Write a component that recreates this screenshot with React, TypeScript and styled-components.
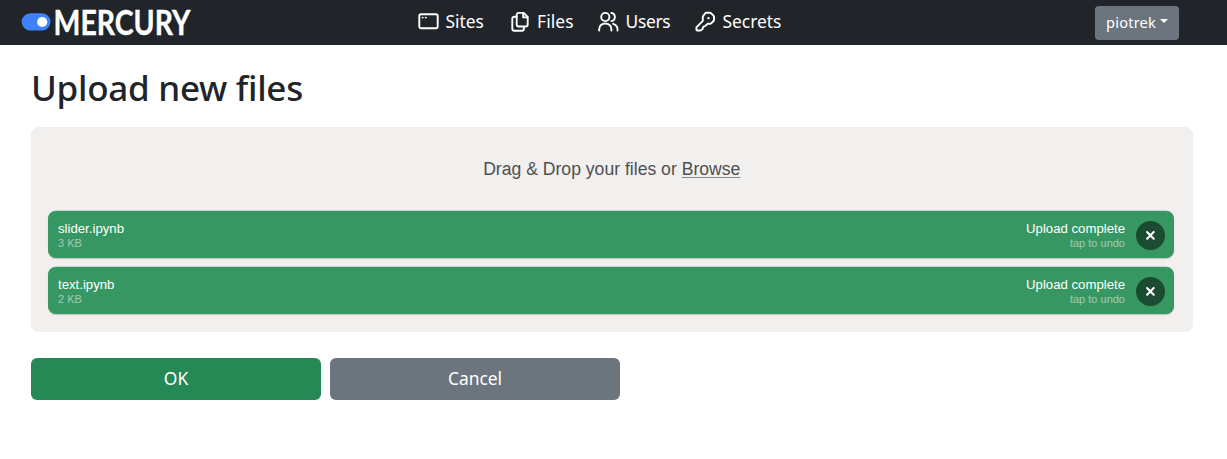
import React from "react";
import styled, { createGlobalStyle } from "styled-components";

const GlobalStyle = createGlobalStyle`
  * { box-sizing: border-box; }
  body {
    margin: 0;
    background: #fff;
    color: #212529;
    font-family: "Noto Sans", sans-serif;
  }
`;

const Navbar = styled.header`
  display: grid;
  grid-template-columns: 1fr auto 1fr;
  align-items: center;
  height: 45px;
  padding: 0 48px 0 21px;
  background: #212529;
  color: #fff;
`;

const Logo = styled.svg`
  display: block;
  overflow: visible;
`;

const Nav = styled.nav`
  display: flex;
  gap: 26px;
`;

const NavLink = styled.a<{ $width: number; $gap?: number; $spacing?: number }>`
  display: flex;
  align-items: center;
  gap: ${(p) => p.$gap ?? 6.5}px;
  width: ${(p) => p.$width}px;
  padding-bottom: 2px;
  font-size: 17.4px;
  line-height: 24px;
  letter-spacing: ${(p) => p.$spacing ?? 0}px;
  white-space: nowrap;
`;

const NavText = styled.span`
  padding-bottom: 2px;
  line-height: 22px;
`;

const NavIcon = styled.svg.attrs({
  width: 21,
  height: 21,
  viewBox: "0 0 21 21",
  fill: "none",
  stroke: "#fff",
  strokeWidth: 1.9,
  strokeLinejoin: "round",
  strokeLinecap: "round",
})`
  flex: none;
`;

const UserButton = styled.button`
  display: flex;
  align-items: center;
  justify-content: center;
  justify-self: end;
  gap: 4px;
  width: 84px;
  height: 34px;
  margin-top: 1px;
  padding: 0 0 2px;
  border: 0;
  border-radius: 4px;
  background: #6c757d;
  color: #fff;
  font: 14.6px "Noto Sans", sans-serif;
  letter-spacing: 0.2px;
`;

const Caret = styled.span`
  margin-top: -2px;
  border-top: 4.5px solid;
  border-left: 4.5px solid transparent;
  border-right: 4.5px solid transparent;
`;

const Main = styled.main`
  padding: 21px 34px 0 31px;
`;

const Title = styled.h1`
  margin: 0 0 17px;
  font: 500 35px/44px "Noto Sans", sans-serif;
  letter-spacing: -0.28px;
  white-space: nowrap;
`;

const DropZone = styled.section`
  height: 205px;
  padding: 0 19px 0 17px;
  border-radius: 8px;
  background: #f1f0ef;
  font-family: "Liberation Sans", Arial, sans-serif;
`;

const DropLabel = styled.div`
  height: 84px;
  padding-left: 1.5px;
  line-height: 84px;
  text-align: center;
  font-size: 17.6px;
  color: #4f4f4f;
`;

const Browse = styled.span`
  text-decoration: underline;
  text-decoration-thickness: 1px;
  text-decoration-color: #858585;
  text-underline-offset: 2px;
`;

const FileList = styled.div`
  display: flex;
  flex-direction: column;
  gap: 9px;
`;

const FileRow = styled.div`
  display: flex;
  align-items: center;
  height: 47px;
  padding: 1px 9px 0 10px;
  border-radius: 8px;
  background: #369763;
  box-shadow: 0 1px 1px rgba(0, 0, 0, 0.2), 0 -0.5px 0 rgba(54, 151, 99, 0.5);
  color: #fff;
`;

const Info = styled.div<{ $end?: boolean }>`
  flex: ${(p) => (p.$end ? "none" : 1)};
  margin-right: ${(p) => (p.$end ? 11 : 0)}px;
  text-align: ${(p) => (p.$end ? "right" : "left")};
`;

const Primary = styled.div`
  font-size: 13.2px;
  line-height: 15px;
`;

const Secondary = styled.div`
  font-size: 11px;
  line-height: 14px;
  opacity: 0.5;
`;

const UndoButton = styled.button`
  display: grid;
  place-items: center;
  width: 29px;
  height: 29px;
  padding: 0;
  border: 0;
  border-radius: 50%;
  background: #1b4c32;
`;

const Actions = styled.div`
  display: flex;
  gap: 9px;
  margin-top: 26px;
`;

const ActionButton = styled.button<{ $color: string }>`
  width: 290px;
  height: 42px;
  padding: 0 0 3px;
  border: 0;
  border-radius: 6px;
  background: ${(p) => p.$color};
  color: #fff;
  font: 17.4px "Noto Sans", sans-serif;
`;

const SitesIcon = () => (
  <NavIcon>
    <rect x="1.3" y="3.3" width="18.4" height="14" rx="1.8" />
    <path d="M4.6 6.6h.1M7.7 6.6h.1" />
  </NavIcon>
);

const FilesIcon = () => (
  <NavIcon>
    <path d="M7.7 1.9h5l4 4v7.6a2 2 0 0 1-2 2h-7a2 2 0 0 1-2-2V3.9a2 2 0 0 1 2-2Z" />
    <path d="M12.2 2.2v4.2h4.2" />
    <path d="M5.5 5.7H3.3a2 2 0 0 0-2 2v10.1a2 2 0 0 0 2 2h7.6a2 2 0 0 0 2-2v-1.9" />
  </NavIcon>
);

const UsersIcon = () => (
  <NavIcon>
    <circle cx="7.3" cy="6" r="4.1" />
    <path d="M1.2 19.6v-1.7a6.1 5.4 0 0 1 12.2 0v1.7" />
    <path d="M13.4 2a4.1 4.1 0 0 1 0 8.1" />
    <path d="M15.2 12.8c2.9 1 4.3 2.9 4.3 5.3v1.5" />
  </NavIcon>
);

const SecretsIcon = () => (
  <NavIcon>
    <path d="M11.4 1.7h3.5a1.6 1.6 0 0 1 1.1.5l2.5 2.5a1.6 1.6 0 0 1 .5 1.1v3.1a1.6 1.6 0 0 1-.5 1.1l-2.3 2.3a1.6 1.6 0 0 1-1.1.5h-2.6l-2.4 2.4-1.8.5-.5 1.9-1.5 1.5a1.6 1.6 0 0 1-1.1.4H2.4a1 1 0 0 1-1-1v-1.6a1.6 1.6 0 0 1 .5-1.1l5.9-5.9V6.1a1.6 1.6 0 0 1 .4-1.1l2.1-2.8a1.6 1.6 0 0 1 1.1-.5Z" />
    <path d="M13.4 7.2h.1" strokeWidth="2.3" />
  </NavIcon>
);

const files = [
  { name: "slider.ipynb", size: "3 KB" },
  { name: "text.ipynb", size: "2 KB" },
];

export default function App() {
  return (
    <>
      <GlobalStyle />
      <Navbar>
        <Logo width="180" height="45" viewBox="0 0 180 45">
          <rect x="0.7" y="13.2" width="28.8" height="17.2" rx="8.6" fill="#3d82f8" />
          <circle cx="21.2" cy="22" r="5.1" fill="#fff" />
          <text x="32.5" y="34.8" fill="#fff" stroke="#fff" strokeWidth="0.4" fontFamily="Lato, sans-serif" fontWeight="700" fontSize="35" textLength="137" lengthAdjust="spacingAndGlyphs">
            MERCURY
          </text>
        </Logo>
        <Nav>
          <NavLink $width={67}><SitesIcon /><NavText>Sites</NavText></NavLink>
          <NavLink $width={61} $gap={5} $spacing={0.1}><FilesIcon /><NavText>Files</NavText></NavLink>
          <NavLink $width={71} $spacing={-0.3}><UsersIcon /><NavText>Users</NavText></NavLink>
          <NavLink $width={87}><SecretsIcon /><NavText>Secrets</NavText></NavLink>
        </Nav>
        <UserButton>piotrek<Caret /></UserButton>
      </Navbar>
      <Main>
        <Title>Upload new files</Title>
        <DropZone>
          <DropLabel>Drag &amp; Drop your files or <Browse>Browse</Browse></DropLabel>
          <FileList>
            {files.map((file) => (
              <FileRow key={file.name}>
                <Info>
                  <Primary>{file.name}</Primary>
                  <Secondary>{file.size}</Secondary>
                </Info>
                <Info $end>
                  <Primary>Upload complete</Primary>
                  <Secondary>tap to undo</Secondary>
                </Info>
                <UndoButton aria-label="Undo">
                  <svg width="11" height="11" viewBox="0 0 11 11" stroke="#fff" strokeWidth="2.1" strokeLinecap="round">
                    <path d="M2.1 2.1l6.6 6.6M8.7 2.1L2.1 8.7" />
                  </svg>
                </UndoButton>
              </FileRow>
            ))}
          </FileList>
        </DropZone>
        <Actions>
          <ActionButton $color="#268955">OK</ActionButton>
          <ActionButton $color="#6c757d">Cancel</ActionButton>
        </Actions>
      </Main>
    </>
  );
}
